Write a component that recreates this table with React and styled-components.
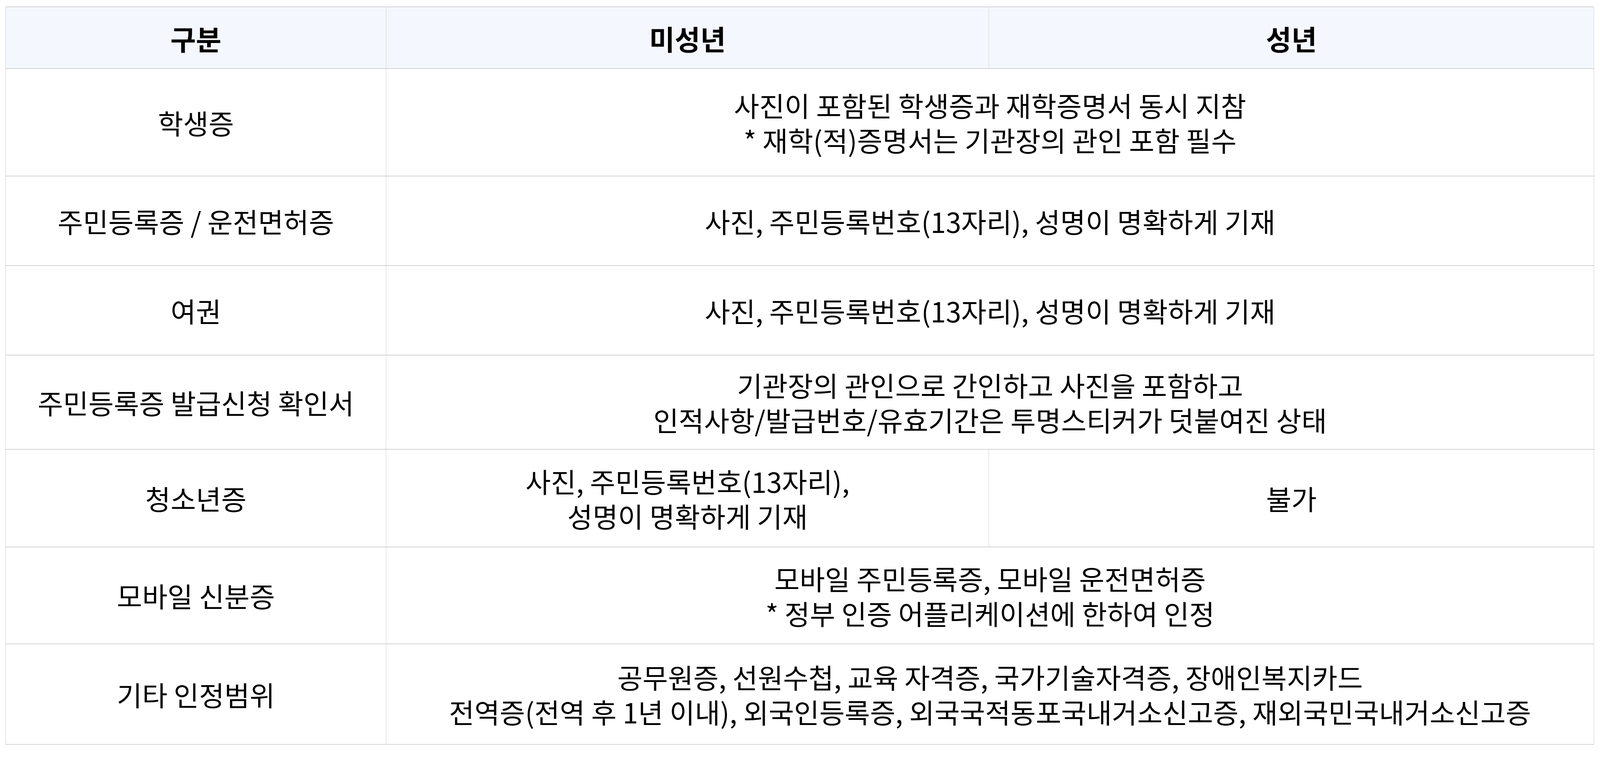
import React from "react";
import styled, { createGlobalStyle } from "styled-components";

const GlobalStyle = createGlobalStyle`
  html, body {
    margin: 0;
    padding: 0;
    background: #fff;
  }
  body {
    font-family: "Noto Sans CJK KR", "Noto Sans", sans-serif;
    color: #000;
  }
`;

const Wrap = styled.div`
  padding: 17px 16px 10px 14px;
`;

const Table = styled.table`
  width: 4066px;
  border-collapse: collapse;
  table-layout: fixed;
  border: 1px solid #ababab;
`;

const Row = styled.tr`
  height: ${(p) => p.$h}px;
`;

const HeadCell = styled.th`
  background: #f4f7fd;
  font-size: 71px;
  font-weight: 700;
  text-align: center;
  vertical-align: middle;
  border-top: 1px solid #ababab;
  border-bottom: 1px solid #ababab;
  border-left: 1px solid #d2d2d2;
  border-right: 1px solid #d2d2d2;
  padding: 0;
`;

const Cell = styled.td`
  font-size: 70.5px;
  font-weight: 400;
  line-height: 89px;
  text-align: center;
  vertical-align: middle;
  border-top: 1px solid #ababab;
  border-bottom: 1px solid #ababab;
  border-left: 1px solid #d2d2d2;
  border-right: 1px solid #d2d2d2;
  padding: 0;
  white-space: nowrap;
`;

const Line = styled.div`
  display: block;
`;

const rows = [
  { label: "학생증", h: 275, both: ["사진이 포함된 학생증과 재학증명서 동시 지참", "* 재학(적)증명서는 기관장의 관인 포함 필수"] },
  { label: "주민등록증 / 운전면허증", h: 229, both: ["사진, 주민등록번호(13자리), 성명이 명확하게 기재"] },
  { label: "여권", h: 229, both: ["사진, 주민등록번호(13자리), 성명이 명확하게 기재"] },
  { label: "주민등록증 발급신청 확인서", h: 241, both: ["기관장의 관인으로 간인하고 사진을 포함하고", "인적사항/발급번호/유효기간은 투명스티커가 덧붙여진 상태"] },
  { label: "청소년증", h: 250, minor: ["사진, 주민등록번호(13자리),", "성명이 명확하게 기재"], adult: ["불가"] },
  { label: "모바일 신분증", h: 248, both: ["모바일 주민등록증, 모바일 운전면허증", "* 정부 인증 어플리케이션에 한하여 인정"] },
  { label: "기타 인정범위", h: 257, both: ["공무원증, 선원수첩, 교육 자격증, 국가기술자격증, 장애인복지카드", "전역증(전역 후 1년 이내), 외국인등록증, 외국국적동포국내거소신고증, 재외국민국내거소신고증"] },
];

const Lines = ({ items }) => items.map((t, i) => <Line key={i}>{t}</Line>);

export default function App() {
  return (
    <>
      <GlobalStyle />
      <Wrap>
        <Table>
          <colgroup>
            <col style={{ width: 974 }} />
            <col style={{ width: 1543 }} />
            <col style={{ width: 1549 }} />
          </colgroup>
          <thead>
            <Row $h={158}>
              <HeadCell>구분</HeadCell>
              <HeadCell>미성년</HeadCell>
              <HeadCell>성년</HeadCell>
            </Row>
          </thead>
          <tbody>
            {rows.map((r) => (
              <Row key={r.label} $h={r.h}>
                <Cell>{r.label}</Cell>
                {r.both ? (
                  <Cell colSpan={2}>
                    <Lines items={r.both} />
                  </Cell>
                ) : (
                  <>
                    <Cell>
                      <Lines items={r.minor} />
                    </Cell>
                    <Cell>
                      <Lines items={r.adult} />
                    </Cell>
                  </>
                )}
              </Row>
            ))}
          </tbody>
        </Table>
      </Wrap>
    </>
  );
}
